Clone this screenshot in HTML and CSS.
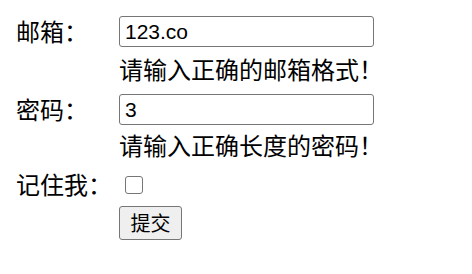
FILE: index.html
```html
<!DOCTYPE html>
<html lang="zh-CN">
<head>
<meta charset="utf-8">
<title>表单</title>
<link rel="stylesheet" href="styles.css">
</head>
<body>
<form class="form">
  <label class="label" for="email">邮箱：</label>
  <input class="field" id="email" type="text" value="123.co">
  <span class="spacer"></span>
  <span class="error">请输入正确的邮箱格式！</span>

  <label class="label" for="pwd">密码：</label>
  <input class="field" id="pwd" type="text" value="3">
  <span class="spacer"></span>
  <span class="error">请输入正确长度的密码！</span>

  <label class="label" for="remember">记住我：</label>
  <span class="check-cell"><input class="check" id="remember" type="checkbox"></span>

  <span class="spacer"></span>
  <span class="btn-cell"><button class="btn" type="button">提交</button></span>
</form>
</body>
</html>
```

FILE: styles.css
```css
html, body {
  margin: 0;
  padding: 0;
  background: #ffffff;
}

body {
  font-family: "Noto Sans CJK SC", "Liberation Sans", sans-serif;
  color: #000000;
}

.form {
  display: grid;
  grid-template-columns: 103px auto;
  grid-template-rows: 31px 47px 31px 44px 32px 39px;
  align-items: center;
  justify-items: start;
  padding: 16px 0 0 16px;
}

.label {
  font-size: 24px;
  line-height: 32px;
  margin-bottom: 2px;
}

.field {
  box-sizing: border-box;
  width: 255px;
  height: 31px;
  margin: 0;
  padding: 0 0 0 5px;
  border: 1px solid #767676;
  border-radius: 3px;
  font-family: "Liberation Sans", Arial, sans-serif;
  font-size: 21px;
  color: #000000;
  background: #ffffff;
  outline: none;
}

.error {
  font-size: 24px;
  line-height: 32px;
  margin-bottom: 4px;
}

.check-cell {
  display: flex;
  align-items: center;
  height: 32px;
}

.check {
  appearance: none;
  -webkit-appearance: none;
  box-sizing: border-box;
  width: 18px;
  height: 18px;
  margin: 0 0 0 6px;
  border: 1.5px solid #767676;
  border-radius: 3px;
  background: #ffffff;
}

.btn-cell {
  display: flex;
  align-self: end;
}

.btn {
  box-sizing: border-box;
  width: 63px;
  height: 34px;
  margin: 0;
  padding: 0;
  border: 1px solid #767676;
  border-radius: 3px;
  background: #efefef;
  font-family: "Noto Sans CJK SC", sans-serif;
  font-size: 20px;
  line-height: 1;
  color: #000000;
}
```
